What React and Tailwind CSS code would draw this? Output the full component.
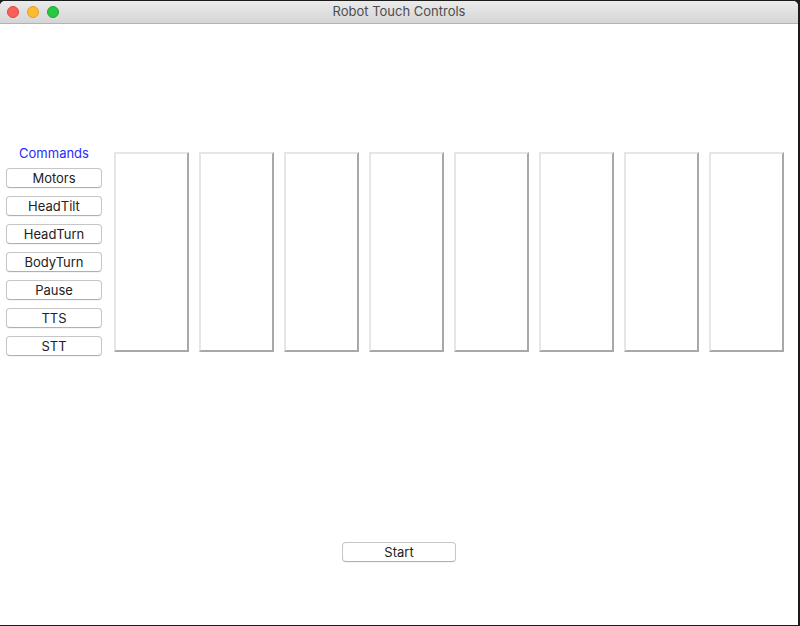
import React from 'react';

const COMMANDS = ['Motors', 'HeadTilt', 'HeadTurn', 'BodyTurn', 'Pause', 'TTS', 'STT'];
const SLOTS = [0, 1, 2, 3, 4, 5, 6, 7];

function MacButton({ label, className = '' }) {
  return (
    <button
      className={`h-5 rounded-[4px] border border-[#c6c6c6] border-b-[#b0b0b0] bg-white text-[13px] leading-none text-[#222] shadow-[0_0.5px_0.5px_rgba(0,0,0,0.08)] ${className}`}
    >
      {label}
    </button>
  );
}

export default function App() {
  return (
    <div className="w-[800px] h-[626px] bg-[#1c1c1c] font-['Inter','Liberation_Sans',sans-serif] overflow-hidden">
      <div className="w-[798px] h-[624px] mt-px bg-white rounded-t-[5px] overflow-hidden flex flex-col">
        {/* title bar */}
        <div className="relative h-[23px] shrink-0 bg-gradient-to-b from-[#ebebeb] to-[#d5d5d5] border-b border-[#b3b3b3] flex items-center justify-center">
          <div className="absolute left-[7px] top-[5px] flex gap-2">
            <span className="w-3 h-3 rounded-full bg-[#fc5f57] border border-[#e0443e]" />
            <span className="w-3 h-3 rounded-full bg-[#fdbc2e] border border-[#dea123]" />
            <span className="w-3 h-3 rounded-full bg-[#28c840] border border-[#1aab29]" />
          </div>
          <span className="text-[13px] text-[#4d4d4d]">Robot Touch Controls</span>
        </div>

        {/* content */}
        <div className="flex flex-col pt-[122px]">
          <div className="flex items-start">
            <div className="ml-[6px] w-[96px] flex flex-col gap-2">
              <div className="mt-px -mb-px h-[14px] flex items-center justify-center text-[13px] text-[#2a2aff]">Commands</div>
              {COMMANDS.map(c => (
                <MacButton key={c} label={c} className="w-full" />
              ))}
            </div>
            <div className="ml-[12px] mt-[6px] flex gap-[10px]">
              {SLOTS.map(i => (
                <div
                  key={i}
                  className="w-[75px] h-[200px] bg-white border-2 border-t-[#e6e6e6] border-l-[#e6e6e6] border-r-[#a8a8a8] border-b-[#a8a8a8]"
                />
              ))}
            </div>
          </div>

          <div className="mt-[186px] flex justify-center">
            <MacButton label="Start" className="w-[114px]" />
          </div>
        </div>
      </div>
    </div>
  );
}
